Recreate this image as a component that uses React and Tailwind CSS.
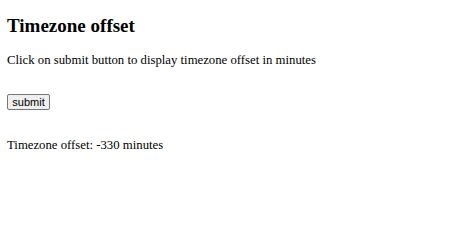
export default function App() {
  return (
    <div className="min-h-[205px] bg-white px-[7px] pt-[15px] text-black font-['Liberation_Serif',serif]">
      <h2 className="text-[19px] font-bold leading-[22px]">Timezone offset</h2>
      <p className="mt-[16px] text-[12.75px] leading-[15px]">
        Click on submit button to display timezone offset in minutes
      </p>
      <button className="mt-[26px] block h-[16px] w-[43px] rounded-[2px] border border-[#767676] bg-[#efefef] font-['Liberation_Sans',sans-serif] text-[11px] leading-[14px] text-black">
        submit
      </button>
      <p className="mt-[28px] text-[12.75px] leading-[15px]">Timezone offset: -330 minutes</p>
    </div>
  )
}
